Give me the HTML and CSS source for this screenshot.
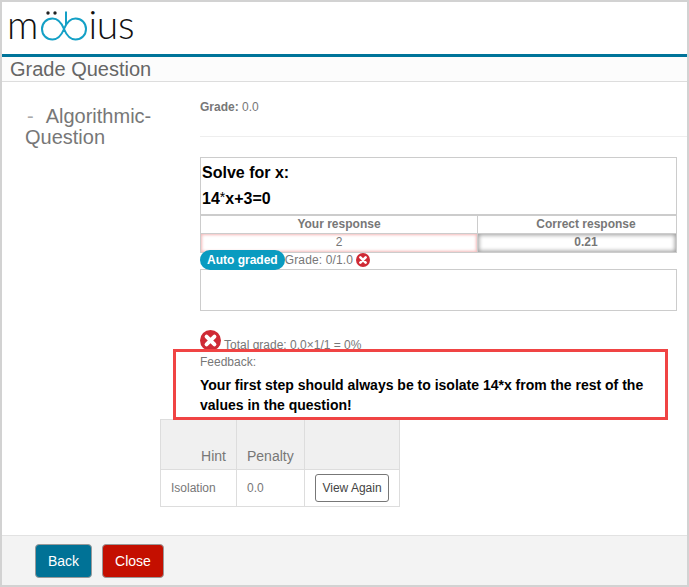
FILE: index.html
```html
<!DOCTYPE html>
<html lang="en">
<head>
<meta charset="utf-8">
<title>Grade Question</title>
<link rel="stylesheet" href="styles.css">
</head>
<body>
<div class="page">
  <header class="brand">
    <div class="logo">
      <span class="logo-text">m</span>
      <svg class="logo-mark" width="48" height="36" viewBox="0 0 48 36" aria-hidden="true">
        <circle cx="7" cy="5" r="1.700" fill="#222"/>
        <circle cx="14" cy="5" r="1.700" fill="#222"/>
        <path d="M11.500 10.500C5.500 10.500 1 15 1 21C1 27 5.500 31.500 11.500 31.500C18 31.500 21 26 23 21C25 16 28 10.500 34.500 10.500C40.500 10.500 45 15 45 21C45 27 40.500 31.500 34.500 31.500C28 31.500 25 26 23 21C21 16 18 10.500 11.500 10.500Z" fill="none" stroke="#14a0c6" stroke-width="2"/>
        <path d="M25 3.500V17" fill="none" stroke="#14a0c6" stroke-width="2"/>
      </svg>
      <span class="logo-text logo-end">ius</span>
    </div>
  </header>
  <div class="title-bar">Grade Question</div>
  <main class="content">
    <aside class="side">
      <span class="dash">-</span>Algorithmic-<br>Question
    </aside>
    <section class="main">
      <p class="grade-line"><b>Grade:</b> 0.0</p>
      <hr class="rule">
      <div class="question">
        <div class="q-text">
          <p class="q-title">Solve for x:</p>
          <p class="q-eq">14<span class="ast">*</span>x+3=0</p>
        </div>
        <div class="resp-table">
          <div class="resp-head">Your response</div>
          <div class="resp-head resp-right">Correct response</div>
          <div class="resp-cell resp-wrong">2</div>
          <div class="resp-cell resp-correct">0.21</div>
        </div>
      </div>
      <div class="auto-row">
        <span class="pill">Auto graded</span>
        <span class="auto-grade">Grade: 0/1.0</span>
        <svg class="x-icon" width="14" height="14" viewBox="0 0 24 24" aria-hidden="true"><circle cx="12" cy="12" r="12" fill="#cf2a35"/><path d="M7.500 7.500l9 9m0-9l-9 9" stroke="#fff" stroke-width="4.500" stroke-linecap="round"/></svg>
      </div>
      <div class="comment-box"></div>
      <div class="total">
        <svg width="21" height="21" viewBox="0 0 24 24" aria-hidden="true"><circle cx="12" cy="12" r="12" fill="#cf2a35"/><path d="M7.500 7.500l9 9m0-9l-9 9" stroke="#fff" stroke-width="4.500" stroke-linecap="round"/></svg>
        <span>Total grade: 0.0×1/1 = 0%</span>
      </div>
      <div class="feedback">
        <div class="fb-label">Feedback:</div>
        <p class="fb-text">Your first step should always be to isolate 14*x from the rest of the values in the question!</p>
        <div class="highlight"></div>
      </div>
      <table class="hints">
        <thead>
          <tr><th class="c1">Hint</th><th class="c2">Penalty</th><th class="c3"></th></tr>
        </thead>
        <tbody>
          <tr><td>Isolation</td><td class="num">0.0</td><td class="act"><button class="view-btn" type="button">View Again</button></td></tr>
        </tbody>
      </table>
    </section>
  </main>
  <footer class="foot">
    <button class="btn btn-back" type="button">Back</button>
    <button class="btn btn-close" type="button">Close</button>
  </footer>
</div>
</body>
</html>
```
FILE: styles.css
```css
* { box-sizing: border-box; }
html, body { margin: 0; padding: 0; height: 100%; }
body { font-family: "Liberation Sans", Arial, sans-serif; color: #666; background: #fff; }
.page { width: 689px; height: 587px; border: 2px solid #d2d2d2; display: flex; flex-direction: column; overflow: hidden; }
.brand { height: 52px; flex: none; padding: 6px 0 0 5px; }
.logo { display: flex; align-items: flex-start; height: 36px; }
.logo-text { font-family: Lato, sans-serif; font-weight: 300; font-size: 39px; line-height: 36px; margin-top: -2px; color: #111; }
.logo-mark { margin-left: 3px; flex: none; }
.logo-end { margin-left: -1px; letter-spacing: -0.3px; }
.title-bar { height: 28px; flex: none; border-top: 3px solid #00749a; border-bottom: 1px solid #ddd; background: #fcfcfc; font-size: 20px; line-height: 24px; padding-left: 8px; color: #666; }
.content { flex: 1; display: flex; min-height: 0; }
.side { width: 158px; flex: none; padding: 24px 0 0 23px; font-size: 20px; line-height: 21px; color: #777; }
.dash { margin: 0 12px 0 2px; color: #aaa; }
.main { flex: 1; min-width: 0; }
.grade-line { margin: 18px 0 0 40px; font-size: 12px; line-height: 14px; color: #777; }
.rule { margin: 22px 0 0 40px; border: 0; border-top: 1px solid #eee; height: 1px; }
.question { margin: 20px 10px 0 40px; border: 1px solid #ccc; }
.q-text { height: 58px; border-bottom: 2px solid #ccc; color: #000; font-weight: 700; font-size: 16px; padding-left: 1px; }
.q-title { margin: 0; padding-top: 5px; line-height: 19px; }
.q-eq { margin: 6px 0 0; line-height: 19px; }
.ast { font-size: 14px; font-weight: 400; vertical-align: 2px; }
.resp-table { display: grid; grid-template-columns: 276px 1fr; font-size: 12px; }
.resp-head { height: 18px; line-height: 17px; text-align: center; font-weight: 700; color: #777; border-bottom: 1px solid #ccc; }
.resp-right { border-left: 1px solid #ccc; padding-left: 18px; }
.resp-cell { height: 18px; line-height: 17px; text-align: center; }
.resp-wrong { box-shadow: inset 0 0 3px 1px #f3b9b9; color: #777; }
.resp-correct { border-left: 1px solid #ccc; padding-left: 18px; box-shadow: inset 0 0 4px 1px #999; font-weight: 700; color: #777; }
.auto-row { margin: -3px 0 0 40px; height: 20px; display: flex; align-items: center; font-size: 12px; color: #777; }
.pill { background: #0a9bc0; color: #fff; font-weight: 700; height: 20px; line-height: 20px; padding: 0 7px; border-radius: 10px; }
.auto-grade { letter-spacing: 0.15px; }
.x-icon { margin-left: 3px; }
.comment-box { margin: -1px 10px 0 40px; height: 42px; border: 1px solid #ccc; }
.total { margin: 19px 0 0 40px; height: 22px; display: flex; align-items: flex-end; font-size: 12px; color: #777; gap: 3px; white-space: nowrap; }
.total svg { flex: none; align-self: flex-start; }
.total span { line-height: 12px; margin-bottom: 1px; }
.feedback { position: relative; margin: 0 0 0 40px; height: 67px; }
.fb-label { font-size: 12px; line-height: 14px; padding-top: 3px; height: 19px; color: #777; }
.fb-text { margin: 4px 20px 0 0; font-size: 14px; font-weight: 700; line-height: 20px; color: #000; }
.highlight { position: absolute; left: -27px; top: -3px; width: 495px; height: 71px; border: 3px solid #f04444; }
.hints { border-collapse: collapse; width: 240px; table-layout: fixed; font-size: 12px; color: #777; }
.hints th, .hints td { border: 1px solid #ddd; }
.hints th { background: #f0f0f0; height: 50px; vertical-align: bottom; font-weight: 400; font-size: 14px; text-align: right; padding: 0 10px 5px; color: #777; }
.hints .c1 { width: 76px; }
.hints .c2 { width: 68px; text-align: left; }
.hints td { height: 37px; padding: 0 10px; }
.view-btn { display: block; width: 74px; height: 28px; padding: 0; border: 1px solid #777; border-radius: 3px; background: #fff; font: 12px "Liberation Sans", Arial, sans-serif; color: #444; }
.foot { margin-top: auto; height: 50px; flex: none; background: #f3f3f3; border-top: 1px solid #e2e2e2; padding: 8px 0 0 33px; display: flex; gap: 10px; align-items: flex-start; }
.btn { height: 34px; border: 1px solid #999; border-radius: 4px; color: #fff; font: 14px "Liberation Sans", Arial, sans-serif; padding: 0; }
.btn-back { width: 57px; background: #007296; }
.btn-close { width: 62px; background: #c40f00; }
```
